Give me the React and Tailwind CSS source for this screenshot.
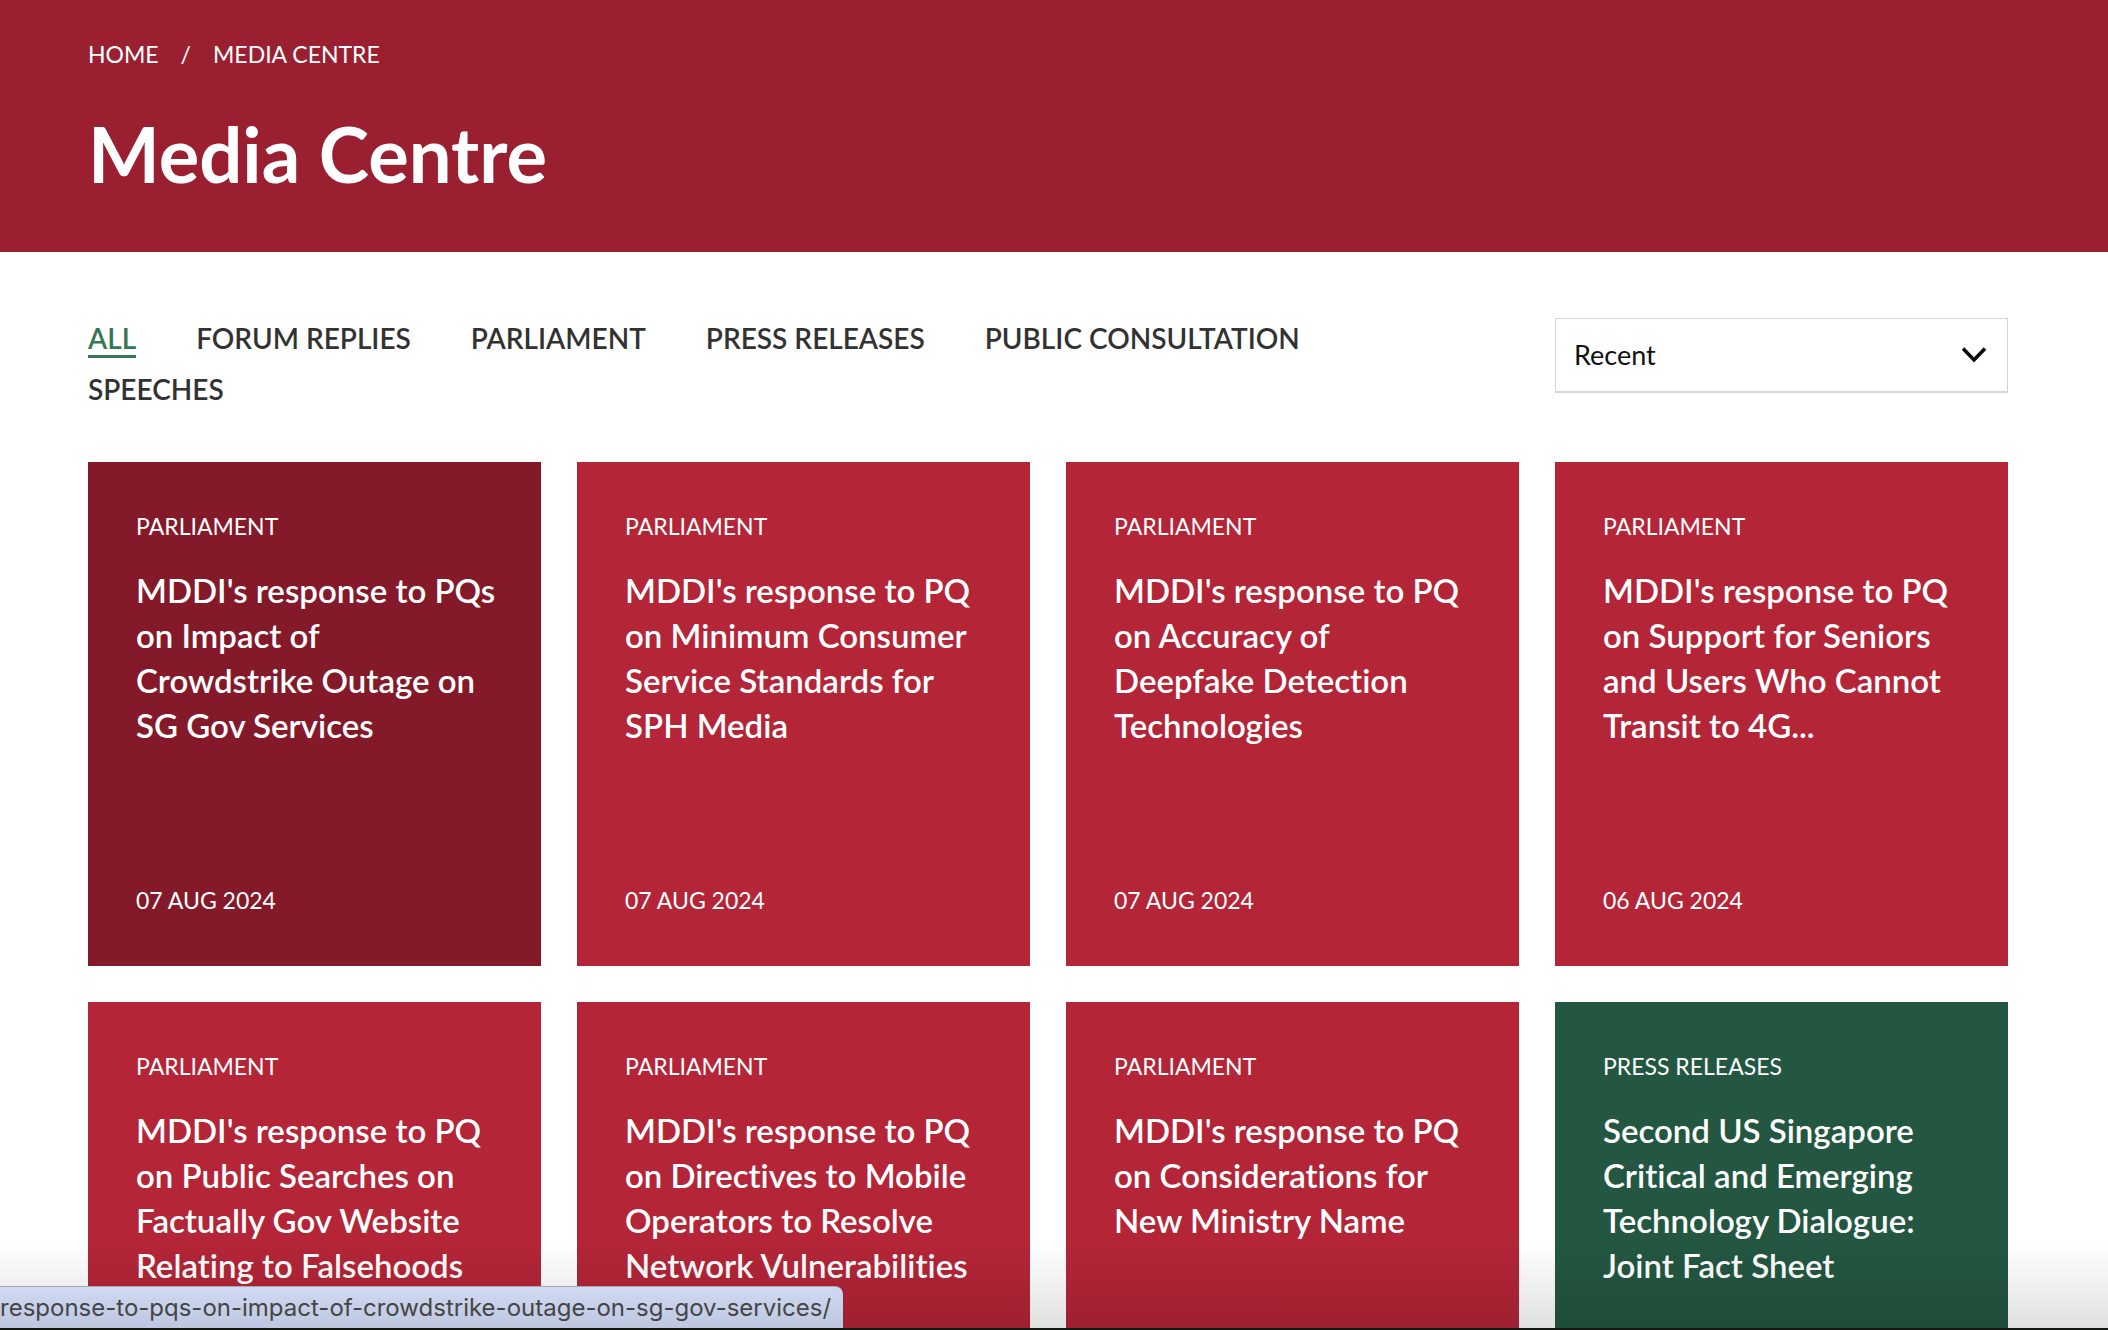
import React from "react";

const TABS = ["ALL", "FORUM REPLIES", "PARLIAMENT", "PRESS RELEASES", "PUBLIC CONSULTATION", "SPEECHES"];

const CARDS = [
  { tag: "PARLIAMENT", title: "MDDI's response to PQs on Impact of Crowdstrike Outage on SG Gov Services", date: "07 AUG 2024", tone: "bg-[#841929]" },
  { tag: "PARLIAMENT", title: "MDDI's response to PQ on Minimum Consumer Service Standards for SPH Media", date: "07 AUG 2024", tone: "bg-[#b32537]" },
  { tag: "PARLIAMENT", title: "MDDI's response to PQ on Accuracy of Deepfake Detection Technologies", date: "07 AUG 2024", tone: "bg-[#b32537]" },
  { tag: "PARLIAMENT", title: "MDDI's response to PQ on Support for Seniors and Users Who Cannot Transit to 4G...", date: "06 AUG 2024", tone: "bg-[#b32537]" },
  { tag: "PARLIAMENT", title: "MDDI's response to PQ on Public Searches on Factually Gov Website Relating to Falsehoods", tone: "bg-[#b32537]" },
  { tag: "PARLIAMENT", title: "MDDI's response to PQ on Directives to Mobile Operators to Resolve Network Vulnerabilities", tone: "bg-[#b32537]" },
  { tag: "PARLIAMENT", title: "MDDI's response to PQ on Considerations for New Ministry Name", tone: "bg-[#b32537]" },
  { tag: "PRESS RELEASES", title: "Second US Singapore Critical and Emerging Technology Dialogue: Joint Fact Sheet", tone: "bg-[#235741]" },
];

function Header() {
  return (
    <header className="bg-[#991f31] pt-9 pb-12 pl-[88px] pr-[100px] text-white">
      <nav aria-label="Breadcrumb">
        <ol className="flex items-center gap-[22px] text-[23px] leading-9">
          <li><a href="#home">HOME</a></li>
          <li aria-hidden="true">/</li>
          <li><a href="#media-centre" aria-current="page">MEDIA CENTRE</a></li>
        </ol>
      </nav>
      <h1 className="mt-8 text-[76px] leading-[100px] font-bold">Media Centre</h1>
    </header>
  );
}

function Filters() {
  return (
    <div className="grid grid-cols-4 items-start gap-x-9">
      <nav aria-label="Categories" className="col-span-3 pt-[3px] pr-20">
        <ul className="flex flex-wrap gap-x-[60px] gap-y-3.5 text-[28px] font-semibold text-[#323232]">
          {TABS.map((tab, i) => (
            <li key={tab} className="flex">
              <a
                href="#list"
                className={i === 0 ? "border-b-3 border-[#35784f] leading-[34px] text-[#35784f]" : "border-b-3 border-transparent leading-[34px]"}
              >
                {tab}
              </a>
            </li>
          ))}
        </ul>
      </nav>
      <div className="relative">
        <select
          aria-label="Sort by"
          className="h-[75px] w-full appearance-none rounded-none border border-b-2 border-[#d5d5d5] bg-white px-[18px] text-[27px] text-[#111]"
        >
          <option>Recent</option>
        </select>
        <svg aria-hidden="true" viewBox="0 0 26 18" className="pointer-events-none absolute top-7 right-5 h-[18px] w-[26px]" fill="none" stroke="#0a0a0a" strokeWidth="3.6">
          <path d="M1 2.5 12 14 23 2.5" />
        </svg>
      </div>
    </div>
  );
}

function Card({ tag, title, date, tone }) {
  return (
    <li className="flex">
      <a href="#article" className={`flex min-h-[504px] w-full flex-col pt-12 pr-11 pb-[50px] pl-12 text-white ${tone}`}>
        <p className="text-[23px] leading-8">{tag}</p>
        <h2 className="mt-[26px] line-clamp-4 text-[33px] leading-[45px] font-semibold [font-variant-ligatures:none]">{title}</h2>
        {date && <p className="mt-auto text-[23px] leading-8">{date}</p>}
      </a>
    </li>
  );
}

export default function App() {
  return (
    <div className="relative h-screen overflow-hidden bg-white font-['Lato',sans-serif]">
      <Header />
      <main className="pt-[66px] pl-[88px] pr-[100px]">
        <Filters />
        <ul id="list" className="mt-[53px] grid grid-cols-4 gap-9">
          {CARDS.map((card) => <Card key={card.title} {...card} />)}
        </ul>
      </main>
      <div className="pointer-events-none absolute inset-x-0 bottom-0">
        <div className="h-22 border-b-2 border-[#141a12] bg-linear-to-b from-black/0 to-black/12" />
        <div className="absolute bottom-0.5 left-0 flex h-[42px] items-center rounded-tr-lg border-t border-[#a9a9ad] bg-linear-to-b from-[#cfdaf2] to-[#bdc7df] pr-3 font-['Inter',sans-serif] text-2xl text-[#454545] shadow-sm">
          response-to-pqs-on-impact-of-crowdstrike-outage-on-sg-gov-services/
        </div>
      </div>
    </div>
  );
}
